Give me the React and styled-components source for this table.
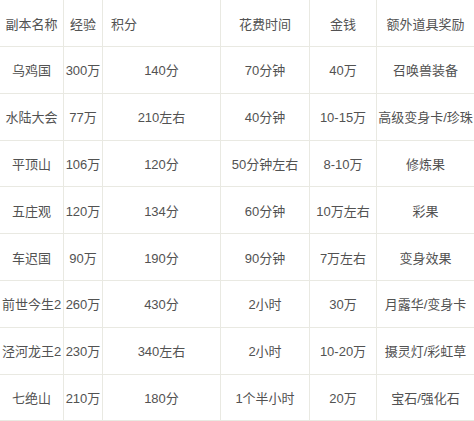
import React from "react";
import styled, { createGlobalStyle } from "styled-components";

const rows = [
  ["乌鸡国", "300万", "140分", "70分钟", "40万", "召唤兽装备"],
  ["水陆大会", "77万", "210左右", "40分钟", "10-15万", "高级变身卡/珍珠"],
  ["平顶山", "106万", "120分", "50分钟左右", "8-10万", "修炼果"],
  ["五庄观", "120万", "134分", "60分钟", "10万左右", "彩果"],
  ["车迟国", "90万", "190分", "90分钟", "7万左右", "变身效果"],
  ["前世今生2", "260万", "430分", "2小时", "30万", "月露华/变身卡"],
  ["泾河龙王2", "230万", "340左右", "2小时", "10-20万", "摄灵灯/彩虹草"],
  ["七绝山", "210万", "180分", "1个半小时", "20万", "宝石/强化石"],
];

const headers = ["副本名称", "经验", "积分", "花费时间", "金钱", "额外道具奖励"];

const Global = createGlobalStyle`
  body {
    margin: 0;
    background: #fff;
    overflow: hidden;
  }
`;

const Table = styled.div`
  display: grid;
  grid-template-columns: 64px 39px 118px 89px 67px 97px;
  width: 474px;
  font-family: "Liberation Sans", "Noto Sans CJK SC", sans-serif;
  font-size: 13px;
  color: #525252;
`;

const Cell = styled.div`
  height: ${(p) => (p.$head ? 46 : 45.8)}px;
  display: flex;
  align-items: center;
  justify-content: ${(p) => (p.$left ? "flex-start" : "center")};
  padding-left: ${(p) => (p.$left ? "8px" : "0")};
  border-bottom: 1px solid #e9e9e2;
  border-right: ${(p) => (p.$last ? "none" : "1px solid #e9e9e2")};
  white-space: nowrap;
`;

export default function App() {
  return (
    <>
      <Global />
      <Table>
        {headers.map((h, i) => (
          <Cell key={h} $head $left={i === 2} $last={i === 5}>
            {h}
          </Cell>
        ))}
        {rows.map((r) =>
          r.map((c, i) => (
            <Cell key={r[0] + i} $last={i === 5}>
              {c}
            </Cell>
          ))
        )}
      </Table>
    </>
  );
}
